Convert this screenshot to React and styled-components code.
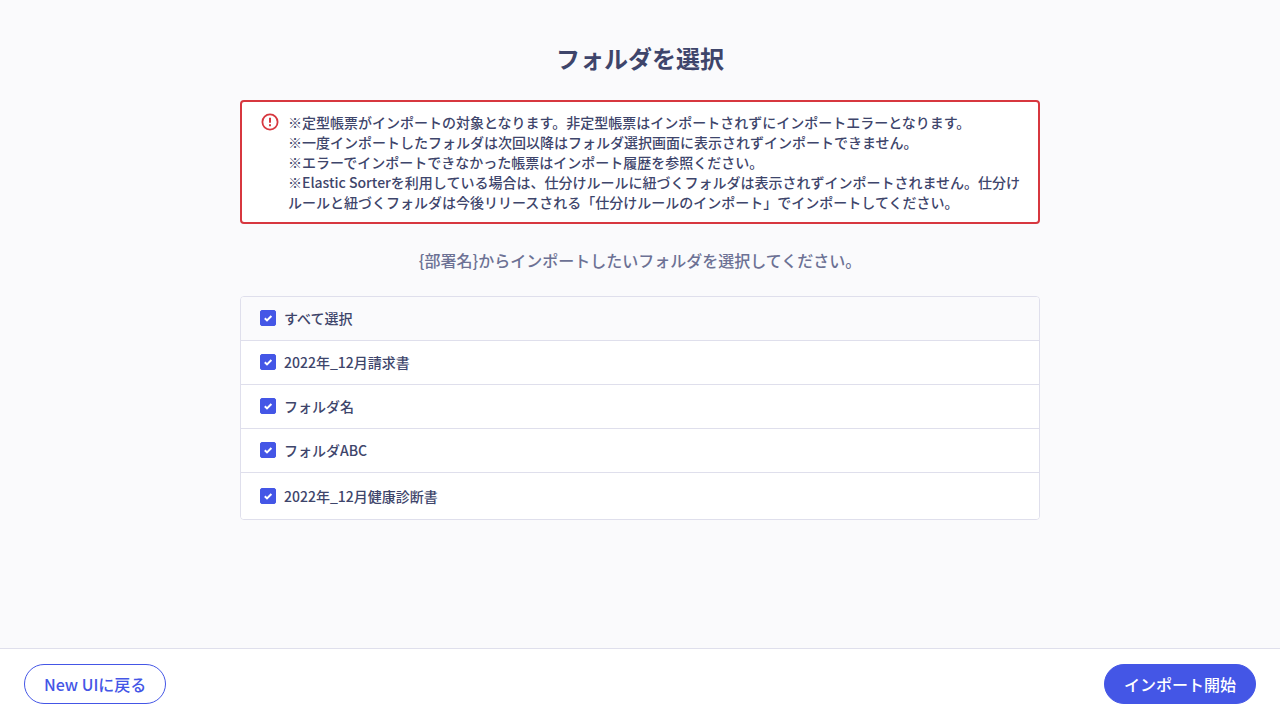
import React, { useState } from "react";
import styled, { createGlobalStyle } from "styled-components";

const GlobalStyle = createGlobalStyle`
  *, *::before, *::after { box-sizing: border-box; }
  body {
    margin: 0;
    background: #fafafc;
    color: #3e456b;
    font-family: "Noto Sans CJK JP", "Noto Sans", sans-serif;
    font-weight: 500;
    font-size: 14px;
    line-height: 20px;
    -webkit-font-smoothing: antialiased;
  }
`;

const Page = styled.div`
  min-height: 100vh;
  display: flex;
  flex-direction: column;
`;

const Main = styled.main`
  flex: 1;
  width: 100%;
  max-width: 848px;
  margin: 0 auto;
  padding: 40px 24px;
`;

const Title = styled.h1`
  margin: 0 0 24px;
  font-size: 24px;
  line-height: 36px;
  font-weight: 700;
  text-align: center;
`;

const Alert = styled.section`
  display: flex;
  gap: 8px;
  padding: 10px 18px;
  border: 2px solid #d7373f;
  border-radius: 4px;
  background: #fff;
`;

const AlertIcon = styled.svg`
  flex: none;
  width: 20px;
  height: 20px;
`;

const AlertText = styled.p`
  margin: 0;
`;

const Lead = styled.p`
  margin: 24px 0;
  font-size: 16px;
  line-height: 24px;
  color: #6c7194;
  text-align: center;
`;

const FolderList = styled.ul`
  margin: 0;
  padding: 0;
  list-style: none;
  border: 1px solid #dfdfec;
  border-radius: 4px;
  background: #fff;
  overflow: hidden;
`;

const FolderRow = styled.li`
  background: ${(p) => (p.$head ? "#fafafc" : "#fff")};
  border-bottom: 1px solid #dfdfec;
  &:last-child { border-bottom: 0; }
`;

const FolderLabel = styled.label`
  display: flex;
  align-items: center;
  gap: 8px;
  padding: ${(p) => (p.$tall ? "13px 19px" : "11px 19px 12px")};
  cursor: pointer;
`;

const CheckWrap = styled.span`
  display: grid;
  width: 16px;
  height: 16px;
  > * { grid-area: 1 / 1; }
`;

const Checkbox = styled.input`
  appearance: none;
  width: 16px;
  height: 16px;
  margin: 0;
  border: 1px solid #4456e6;
  border-radius: 2px;
  background: #fff;
  &:checked { background: #4456e6; }
`;

const CheckMark = styled.svg`
  width: 16px;
  height: 16px;
  pointer-events: none;
`;

const Footer = styled.footer`
  display: flex;
  justify-content: space-between;
  padding: 15px 24px 16px;
  border-top: 1px solid #dfdfec;
  background: #fff;
`;

const Button = styled.button`
  height: 40px;
  padding: 0 19px;
  border: 1px solid #4456e6;
  border-radius: 20px;
  background: ${(p) => (p.$primary ? "#4456e6" : "#fff")};
  color: ${(p) => (p.$primary ? "#fff" : "#4456e6")};
  font: inherit;
  font-size: 16px;
  line-height: 24px;
  cursor: pointer;
`;

const notices = [
  "※定型帳票がインポートの対象となります。非定型帳票はインポートされずにインポートエラーとなります。",
  "※一度インポートしたフォルダは次回以降はフォルダ選択画面に表示されずインポートできません。",
  "※エラーでインポートできなかった帳票はインポート履歴を参照ください。",
  "※Elastic Sorterを利用している場合は、仕分けルールに紐づくフォルダは表示されずインポートされません。仕分けルールと紐づくフォルダは今後リリースされる「仕分けルールのインポート」でインポートしてください。",
];

const folders = ["2022年_12月請求書", "フォルダ名", "フォルダABC", "2022年_12月健康診断書"];

function FolderCheck({ label, checked, onChange, tall }) {
  return (
    <FolderLabel $tall={tall}>
      <CheckWrap>
        <Checkbox type="checkbox" checked={checked} onChange={onChange} />
        {checked && (
          <CheckMark viewBox="0 0 16 16" aria-hidden="true">
            <path d="M4.8 8.2l2.2 2.2 4.4-4.4" fill="none" stroke="#fff" strokeWidth="2" />
          </CheckMark>
        )}
      </CheckWrap>
      {label}
    </FolderLabel>
  );
}

export default function App() {
  const [checked, setChecked] = useState(folders.map(() => true));
  const all = checked.every(Boolean);
  const toggle = (i) => setChecked(checked.map((c, j) => (i === j ? !c : c)));

  return (
    <Page>
      <GlobalStyle />
      <Main>
        <Title>フォルダを選択</Title>
        <Alert>
          <AlertIcon viewBox="0 0 20 20" aria-hidden="true">
            <circle cx="10" cy="10" r="7.6" fill="none" stroke="#d7373f" strokeWidth="1.8" />
            <path d="M10 5.8v5M10 12.3v1.9" stroke="#d7373f" strokeWidth="2" />
          </AlertIcon>
          <div>
            {notices.map((n) => <AlertText key={n}>{n}</AlertText>)}
          </div>
        </Alert>
        <Lead>{"{部署名}からインポートしたいフォルダを選択してください。"}</Lead>
        <FolderList>
          <FolderRow $head>
            <FolderCheck label="すべて選択" checked={all} onChange={() => setChecked(folders.map(() => !all))} />
          </FolderRow>
          {folders.map((name, i) => (
            <FolderRow key={name}>
              <FolderCheck
                label={name}
                tall={i === folders.length - 1}
                checked={checked[i]}
                onChange={() => toggle(i)}
              />
            </FolderRow>
          ))}
        </FolderList>
      </Main>
      <Footer>
        <Button type="button">New UIに戻る</Button>
        <Button type="button" $primary>インポート開始</Button>
      </Footer>
    </Page>
  );
}
